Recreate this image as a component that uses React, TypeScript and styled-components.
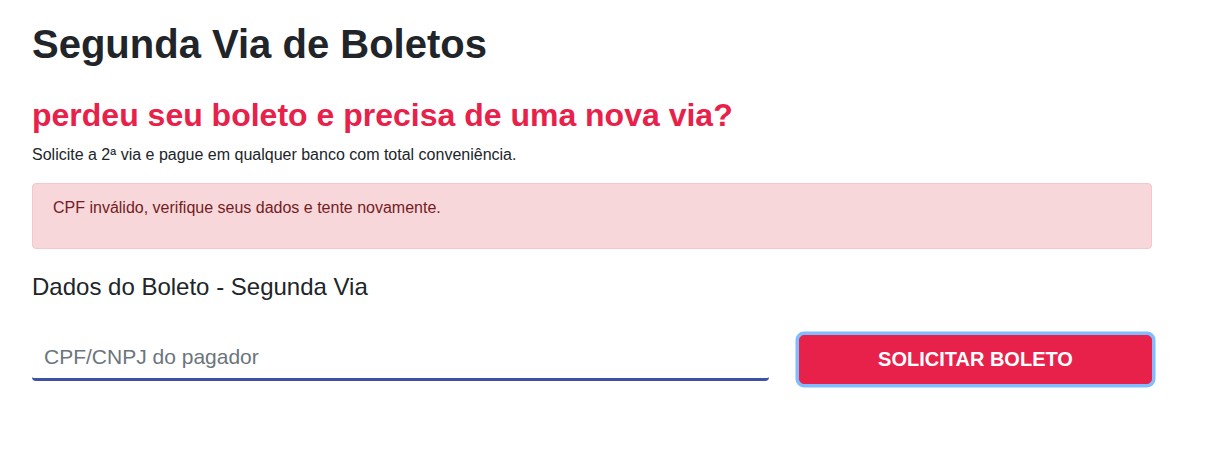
import React from "react";
import styled, { createGlobalStyle } from "styled-components";

const Global = createGlobalStyle`
  * { box-sizing: border-box; }
  body {
    margin: 0;
    background: #fff;
    font-family: "Liberation Sans", Arial, sans-serif;
    color: #212529;
  }
`;

const Page = styled.main`
  width: 1120px;
  margin-left: 32px;
  padding-top: 20px;
  padding-bottom: 40px;
`;

const Title = styled.h1`
  margin: 0;
  font-size: 40px;
  line-height: 48px;
  font-weight: 700;
  color: #212529;
`;

const Lead = styled.h2`
  margin: 28px 0 0;
  font-size: 32px;
  line-height: 38px;
  font-weight: 700;
  color: #e8214a;
`;

const Sub = styled.p`
  margin: 9px 0 0;
  font-size: 16px;
  line-height: 24px;
`;

const Alert = styled.div`
  margin-top: 16px;
  padding: 12px 20px;
  border: 1px solid #f5c6cb;
  border-radius: 4px;
  background: #f8d7da;
  color: #721c24;
  font-size: 16px;
  line-height: 24px;
  p { margin: 0 0 16px; }
`;

const Section = styled.h3`
  margin: 22px 0 0;
  font-size: 24px;
  line-height: 32px;
  font-weight: 400;
`;

const Row = styled.form`
  margin-top: 30px;
  display: grid;
  grid-template-columns: 737px 353px;
  column-gap: 30px;
  align-items: start;
`;

const Input = styled.input`
  width: 100%;
  height: 48px;
  border: 0;
  border-bottom: 3.5px solid #3f51a5;
  border-radius: 0 0 4px 4px;
  padding: 2px 12px 0;
  font-family: "Liberation Sans", Arial, sans-serif;
  font-size: 21px;
  color: #495057;
  outline: none;
  background: #fff;
  &::placeholder { color: #6c757d; }
`;

const Button = styled.button`
  height: 49px;
  margin-top: 2px;
  border: 1px solid #e8214a;
  border-radius: 5px;
  background: #e8214a;
  box-shadow: 0 0 0 3.5px #80bdff;
  color: #fff;
  font-family: "Liberation Sans", Arial, sans-serif;
  font-size: 20px;
  font-weight: 700;
  text-transform: uppercase;
  cursor: pointer;
`;

export default function App() {
  return (
    <>
      <Global />
      <Page>
        <Title>Segunda Via de Boletos</Title>
        <Lead>perdeu seu boleto e precisa de uma nova via?</Lead>
        <Sub>Solicite a 2ª via e pague em qualquer banco com total conveniência.</Sub>
        <Alert>
          <p>CPF inválido, verifique seus dados e tente novamente.</p>
        </Alert>
        <Section>Dados do Boleto - Segunda Via</Section>
        <Row onSubmit={(e) => e.preventDefault()}>
          <Input placeholder="CPF/CNPJ do pagador" />
          <Button type="submit">Solicitar Boleto</Button>
        </Row>
      </Page>
    </>
  );
}
